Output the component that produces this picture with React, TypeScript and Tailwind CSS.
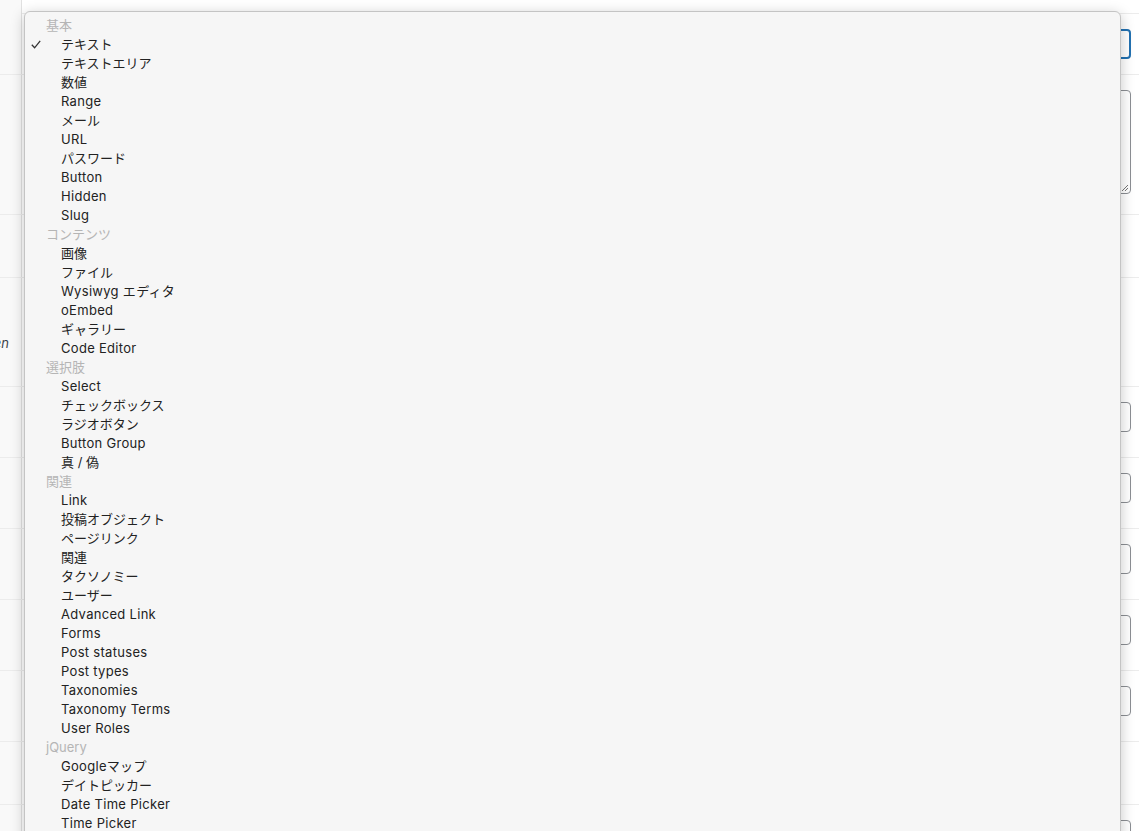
import React from "react";

type Row = { h: number; ctrl?: "select" | "textarea" | "input"; label?: string };

const rows: Row[] = [
  { h: 14 },
  { h: 61, ctrl: "select" },
  { h: 140, ctrl: "textarea" },
  { h: 63 },
  { h: 109, label: "when hidden" },
  { h: 71, ctrl: "input" },
  { h: 71, ctrl: "input" },
  { h: 71, ctrl: "input" },
  { h: 71, ctrl: "input" },
  { h: 71, ctrl: "input" },
  { h: 63 },
  { h: 60, ctrl: "input" },
];

const groups: { title: string; items: string[] }[] = [
  {
    title: "基本",
    items: ["テキスト", "テキストエリア", "数値", "Range", "メール", "URL", "パスワード", "Button", "Hidden", "Slug"],
  },
  { title: "コンテンツ", items: ["画像", "ファイル", "Wysiwyg エディタ", "oEmbed", "ギャラリー", "Code Editor"] },
  { title: "選択肢", items: ["Select", "チェックボックス", "ラジオボタン", "Button Group", "真 / 偽"] },
  {
    title: "関連",
    items: [
      "Link",
      "投稿オブジェクト",
      "ページリンク",
      "関連",
      "タクソノミー",
      "ユーザー",
      "Advanced Link",
      "Forms",
      "Post statuses",
      "Post types",
      "Taxonomies",
      "Taxonomy Terms",
      "User Roles",
    ],
  },
  { title: "jQuery", items: ["Googleマップ", "デイトピッカー", "Date Time Picker", "Time Picker", "カラーピッカー"] },
];

function Control({ kind }: { kind: Row["ctrl"] }) {
  if (kind === "select")
    return (
      <div className="relative h-[30px] w-full rounded-[4px] border-2 border-[#2271b1] bg-white">
        <span className="absolute right-[8px] top-[11px] h-[2px] w-[2px] bg-[#50575e]" />
      </div>
    );
  if (kind === "textarea")
    return (
      <div className="relative h-[104px] w-full rounded-[4px] border border-[#8c8f94] bg-white">
        <svg className="absolute bottom-[1px] right-[1px]" width="8" height="8" viewBox="0 0 8 8">
          <path d="M7 1 L1 7 M7 4 L4 7" stroke="#777" strokeWidth="1" />
        </svg>
      </div>
    );
  if (kind === "input") return <div className="h-[30px] w-full rounded-[4px] border border-[#8c8f94] bg-white" />;
  return null;
}

export default function App() {
  return (
    <div className="relative h-[831px] w-[1139px] overflow-hidden bg-white font-['Inter','Noto_Sans_CJK_JP',sans-serif]">
      <div className="flex flex-col">
        {rows.map((r, i) => (
          <div
            key={i}
            className="flex shrink-0 border-b border-[#ececec]"
            style={{ height: r.h }}
          >
            <div className="flex w-[22px] shrink-0 items-start justify-end overflow-hidden border-r border-[#e1e1e1] bg-[#f9f9f9] pr-[12px] pt-[56px]">
              {r.label ? (
                <span className="whitespace-nowrap text-[13px] italic text-[#3c434a]">{r.label}</span>
              ) : null}
            </div>
            <div className="flex-1 pl-[40px] pr-[8px] pt-[15px]">
              <Control kind={r.ctrl} />
            </div>
          </div>
        ))}
      </div>

      <div className="absolute left-[24px] top-[11px] h-[840px] w-[1097px] rounded-t-[6px] border border-[#c4c4c4] bg-[#f6f6f6] pt-[4px] shadow-[0_3px_14px_rgba(0,0,0,0.22)]">
        {groups.map((g) => (
          <div key={g.title}>
            <div className="flex h-[19px] items-center pl-[21px] text-[13px] leading-none text-[#b5b5b5]">{g.title}</div>
            {g.items.map((it, idx) => (
              <div
                key={it + idx}
                className={
                  /^[A-Za-z]/.test(it)
                    ? "relative flex h-[19px] items-center pl-[36px] text-[13px] leading-none tracking-[0.3px] text-[#222]"
                    : "relative flex h-[19px] items-center pl-[36px] text-[13px] leading-none text-[#222]"
                }
              >
                {g.title === "基本" && idx === 0 ? (
                  <svg className="absolute left-[6px] top-[5px]" width="10" height="9" viewBox="0 0 10 9">
                    <path d="M0.8 4.8 L3.6 7.8 L9.2 0.8" fill="none" stroke="#333" strokeWidth="1.3" />
                  </svg>
                ) : null}
                {it}
              </div>
            ))}
          </div>
        ))}
      </div>
    </div>
  );
}
